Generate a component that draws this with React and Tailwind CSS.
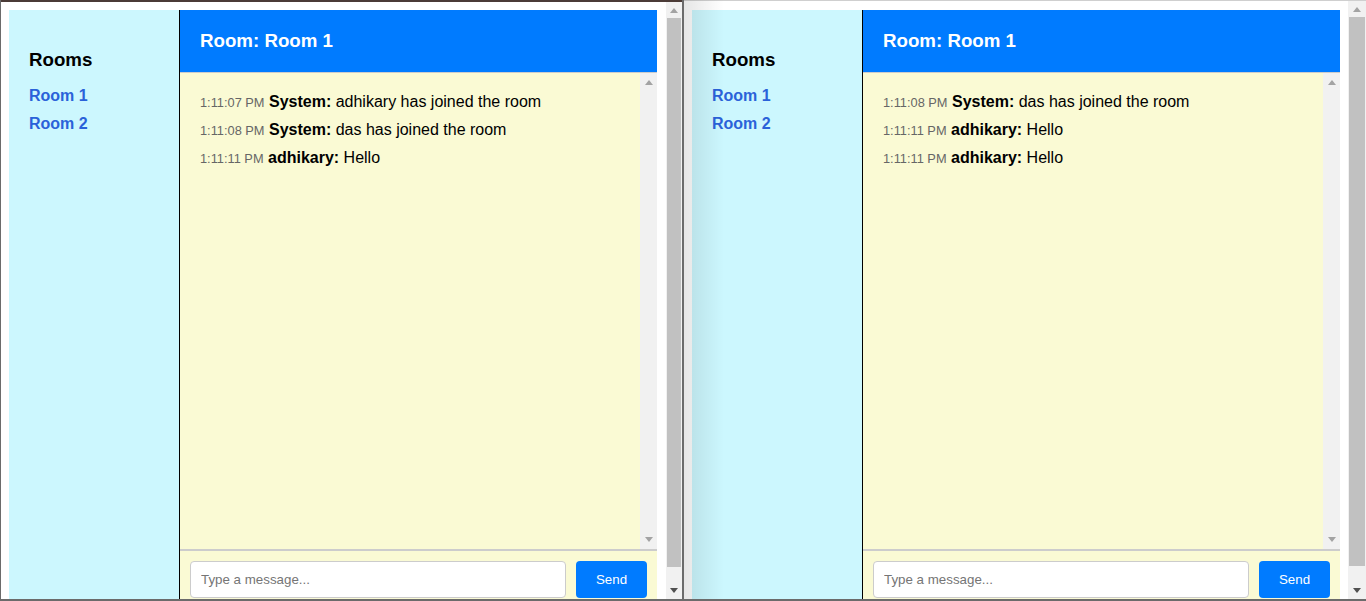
import React from 'react'

const leftMessages = [
  { time: '1:11:07 PM', user: 'System', text: 'adhikary has joined the room' },
  { time: '1:11:08 PM', user: 'System', text: 'das has joined the room' },
  { time: '1:11:11 PM', user: 'adhikary', text: 'Hello' },
]

const rightMessages = [
  { time: '1:11:08 PM', user: 'System', text: 'das has joined the room' },
  { time: '1:11:11 PM', user: 'adhikary', text: 'Hello' },
  { time: '1:11:11 PM', user: 'adhikary', text: 'Hello' },
]

function Arrow({ up, color }) {
  return (
    <svg width="8" height="5" viewBox="0 0 8 5">
      <path d={up ? 'M0 5 L4 0 L8 5 Z' : 'M0 0 L8 0 L4 5 Z'} fill={color} />
    </svg>
  )
}

function PageScrollbar({ width }) {
  return (
    <div className={`${width} shrink-0 bg-[#f1f1f1] flex flex-col`}>
      <div className="h-[16px] flex items-center justify-center">
        <Arrow up color="#a3a3a3" />
      </div>
      <div className="h-[549px] mx-[1px] bg-[#c1c1c1]" />
      <div className="flex-1" />
      <div className="h-[17px] flex items-center justify-center">
        <Arrow color="#505050" />
      </div>
    </div>
  )
}

function ChatWindow({ messages }) {
  return (
    <div className="flex w-[648px] shrink-0 h-[620px]">
      <div className="w-[170px] shrink-0 bg-[#ccf7fe] px-5 pt-[39px]">
        <h3 className="text-[18.72px] font-bold leading-[22px] text-black">Rooms</h3>
        <ul className="mt-[11px]">
          <li className="h-[28px] flex items-center text-[16px] font-bold text-[#2a62d9]">Room 1</li>
          <li className="h-[28px] flex items-center text-[16px] font-bold text-[#2a62d9]">Room 2</li>
        </ul>
      </div>
      <div className="w-[478px] shrink-0 flex flex-col border-l border-black bg-[#fafad4]">
        <div className="h-[63px] shrink-0 bg-[#007bff] border-b border-[#cccccc] px-5 flex items-center">
          <h3 className="text-[18.72px] font-bold text-white">Room: Room 1</h3>
        </div>
        <div className="h-[476px] shrink-0 flex">
          <div className="flex-1 pl-5 pt-[19px]">
            {messages.map((m, i) => (
              <div key={i} className="h-[28px] whitespace-nowrap leading-[20px] text-[16px] text-black">
                <span className="text-[12.8px] text-[#666666]">{m.time}</span>{' '}
                <strong>{m.user}:</strong> <span>{m.text}</span>
              </div>
            ))}
          </div>
          <div className="w-[17px] bg-[#f1f1f1] flex flex-col justify-between items-center py-[7px]">
            <Arrow up color="#a3a3a3" />
            <Arrow color="#a3a3a3" />
          </div>
        </div>
        <div className="border-t-2 border-[#cccccc] flex gap-[10px] px-[10px] pt-[10px]">
          <input
            className="flex-1 h-[37px] bg-white border border-[#cccccc] rounded-[4px] px-[10px] text-[13.333px] placeholder:text-[#757575] outline-none"
            placeholder="Type a message..."
          />
          <button className="w-[71px] h-[37px] bg-[#007bff] text-white rounded-[4px] text-[13.333px]">
            Send
          </button>
        </div>
      </div>
    </div>
  )
}

export default function App() {
  return (
    <div
      className="w-[1366px] h-[601px] overflow-hidden flex flex-col bg-white"
      style={{ fontFamily: '"Liberation Sans", Arial, sans-serif' }}
    >
      <div className="flex h-[599px] overflow-hidden">
        {/* left browser window */}
        <div className="w-[682px] shrink-0 flex flex-col border-l border-[#6b6b6b]">
          <div className="h-[2px] bg-[#4b3b37] shrink-0" />
          <div className="flex flex-1 min-h-0">
            <div className="flex-1 bg-white pl-2 pt-2 overflow-hidden">
              <ChatWindow messages={leftMessages} />
            </div>
            <PageScrollbar width="w-[16px]" />
          </div>
        </div>
        <div className="w-[2px] bg-[#6b6b6b] shrink-0" />
        {/* right browser window */}
        <div className="relative flex-1 flex flex-col">
          <div className="h-[1px] bg-[#cfcfcf] shrink-0" />
          <div className="flex flex-1 min-h-0">
            <div className="flex-1 bg-white pl-2 pt-[9px] overflow-hidden">
              <ChatWindow messages={rightMessages} />
            </div>
            <PageScrollbar width="w-[18px]" />
          </div>
          <div className="absolute left-0 top-0 bottom-0 w-[40px] bg-gradient-to-r from-black/10 to-transparent pointer-events-none" />
        </div>
      </div>
      <div className="h-[2px] bg-[#6b6b6b] shrink-0" />
    </div>
  )
}
